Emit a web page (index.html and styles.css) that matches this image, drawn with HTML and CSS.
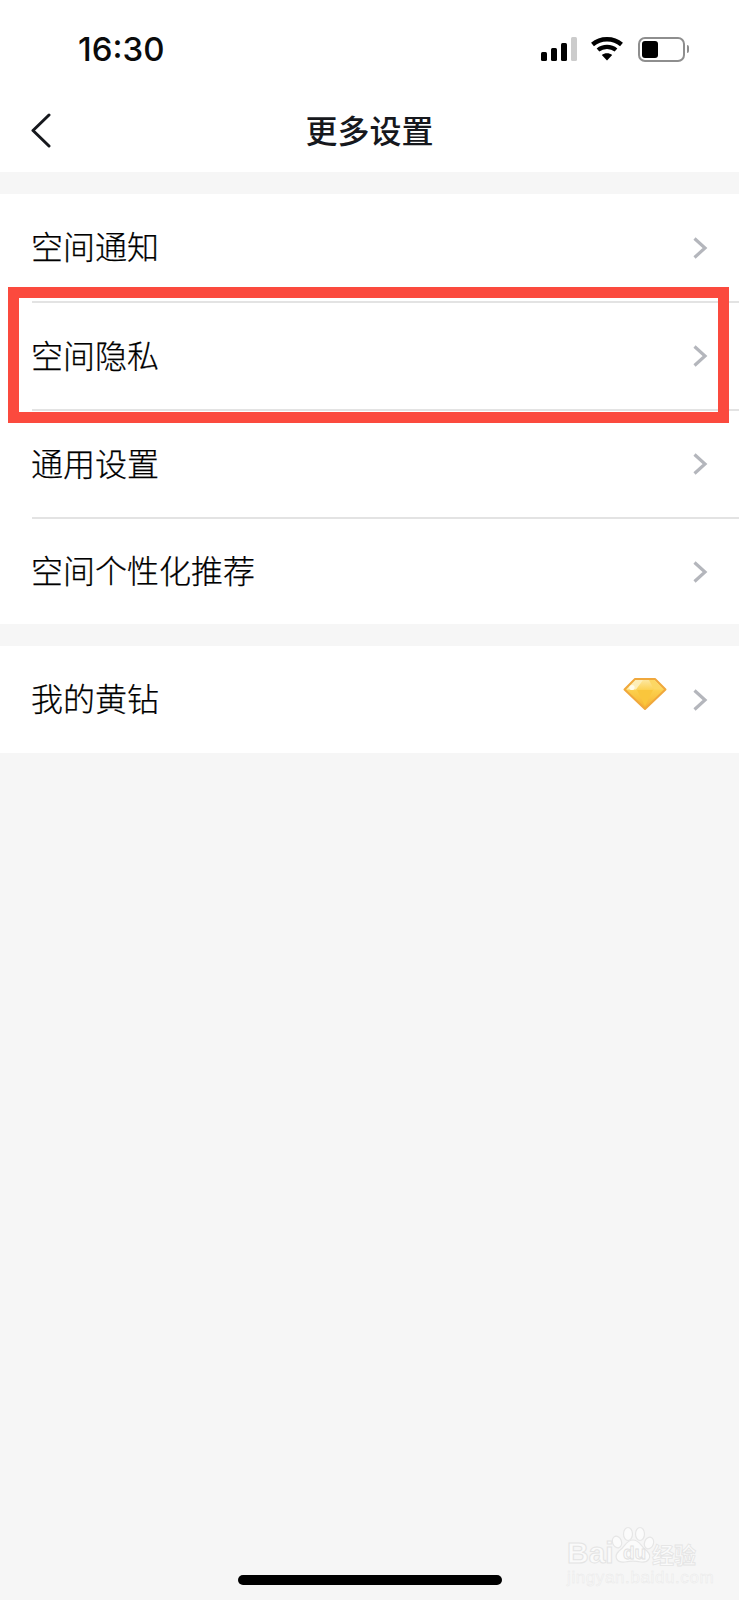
FILE: index.html
```html
<!DOCTYPE html>
<html lang="zh-CN">
<head>
  <meta charset="UTF-8">
  <meta name="viewport" content="width=device-width, initial-scale=1.0">
  <title>更多设置</title>
  <link rel="stylesheet" href="styles.css">
</head>
<body>
  <div class="phone">
    <div class="status-bar">
      <span class="time">16:30</span>
      <div class="status-icons">
        <svg class="signal" width="36" height="25" viewBox="0 0 36 25">
          <rect x="0" y="15" width="6" height="9" rx="1.5" fill="#000"/>
          <rect x="10" y="11" width="6" height="13" rx="1.5" fill="#000"/>
          <rect x="20" y="6" width="6" height="18" rx="1.5" fill="#000"/>
          <rect x="30" y="0" width="6" height="24" rx="1.5" fill="#ccc"/>
        </svg>
        <svg class="wifi" width="32" height="24" viewBox="0 0 32 24">
          <path d="M1.5 7.5 C9.5 0.5 22.5 0.5 30.5 7.5" fill="none" stroke="#000" stroke-width="4.4"/>
          <path d="M7 13 C12 8.8 20 8.8 25 13" fill="none" stroke="#000" stroke-width="4.2"/>
          <path d="M16 23.5 L10.8 18 C13.6 15.6 18.4 15.6 21.2 18 Z" fill="#000"/>
        </svg>
        <div class="battery">
          <div class="battery-body"><div class="battery-level"></div></div>
          <div class="battery-cap"></div>
        </div>
      </div>
    </div>

    <header class="nav">
      <svg class="back" width="22" height="36" viewBox="0 0 22 36">
        <path d="M19 2 L3 17.5 L19 33" fill="none" stroke="#16181d" stroke-width="3" stroke-linecap="round" stroke-linejoin="round"/>
      </svg>
      <h1 class="title">更多设置</h1>
    </header>

    <section class="group first">
      <div class="row"><span class="label">空间通知</span><svg class="chevron" width="16" height="24" viewBox="0 0 16 24"><path d="M2.5 2.5 L13 12 L2.5 21.5" fill="none" stroke="#b4b6bc" stroke-width="3.2"/></svg></div>
      <div class="row"><span class="label">空间隐私</span><svg class="chevron" width="16" height="24" viewBox="0 0 16 24"><path d="M2.5 2.5 L13 12 L2.5 21.5" fill="none" stroke="#b4b6bc" stroke-width="3.2"/></svg></div>
      <div class="row"><span class="label">通用设置</span><svg class="chevron" width="16" height="24" viewBox="0 0 16 24"><path d="M2.5 2.5 L13 12 L2.5 21.5" fill="none" stroke="#b4b6bc" stroke-width="3.2"/></svg></div>
      <div class="row"><span class="label">空间个性化推荐</span><svg class="chevron" width="16" height="24" viewBox="0 0 16 24"><path d="M2.5 2.5 L13 12 L2.5 21.5" fill="none" stroke="#b4b6bc" stroke-width="3.2"/></svg></div>
    </section>

    <section class="group">
      <div class="row">
        <span class="label">我的黄钻</span>
        <svg class="diamond" width="44" height="36" viewBox="0 0 44 36">
          <defs>
            <linearGradient id="gem" x1="0" y1="0" x2="0" y2="1">
              <stop offset="0" stop-color="#fde9a6"/>
              <stop offset="0.4" stop-color="#fccf4c"/>
              <stop offset="1" stop-color="#f6b22f"/>
            </linearGradient>
          </defs>
          <path d="M12 4 H32 L42.5 14.5 L22 34 L1.5 14.5 Z" fill="url(#gem)" stroke="#f0a83c" stroke-width="2" stroke-linejoin="round"/>
          <path d="M12.5 5 H20 L13 14.5 H3.5 Z" fill="#fdeeb8"/>
          <path d="M26 5 H31.5 L40 14.5 H31 Z" fill="#fcd763"/>
          <path d="M14 15 H30 L22 31 Z" fill="#fac63c"/>
          <circle cx="9" cy="12.5" r="2.6" fill="#fffbe9"/>
        </svg>
        <svg class="chevron" width="16" height="24" viewBox="0 0 16 24"><path d="M2.5 2.5 L13 12 L2.5 21.5" fill="none" stroke="#b4b6bc" stroke-width="3.2"/></svg>
      </div>
    </section>

    <div class="highlight"></div>

    <div class="watermark">
      <svg class="paw" width="48" height="44" viewBox="0 0 48 44">
        <g fill="#fbfbfb" stroke="#e6e6e6" stroke-width="1.2">
          <ellipse cx="6" cy="16" rx="4.5" ry="6" transform="rotate(-20 6 16)"/>
          <ellipse cx="17" cy="8" rx="4.5" ry="6.5"/>
          <ellipse cx="29" cy="8" rx="4.5" ry="6.5"/>
          <ellipse cx="38" cy="17" rx="4.5" ry="6" transform="rotate(20 38 17)"/>
          <path d="M22 14 C29 14 30 21 36 25 C42 31 37 37 30 36 C25 35 19 35 14 36 C6 37 2 31 8 25 C14 21 15 14 22 14 Z"/>
        </g>
      </svg>
      <div class="wm-main">
        <span class="wm-bai">Bai</span>
        <span class="wm-du">du</span>
        <span class="wm-cn">经验</span>
      </div>
      <div class="wm-url">jingyan.baidu.com</div>
    </div>

    <div class="home-bar"></div>
  </div>
</body>
</html>
```
FILE: styles.css
```css
* {
  box-sizing: border-box;
}

body {
  margin: 0;
  font-family: "Noto Sans CJK SC", "Liberation Sans", sans-serif;
  background: #f6f6f6;
  color: #16181d;
}

.phone {
  position: relative;
  width: 739px;
  height: 1600px;
  overflow: hidden;
  background: #f6f6f6;
}

.status-bar {
  display: flex;
  justify-content: space-between;
  align-items: center;
  height: 88px;
  padding: 10px 50px 0 78px;
  background: #fff;
}

.time {
  font-family: Inter, "Liberation Sans", sans-serif;
  font-size: 33px;
  font-weight: 500;
  color: #0b0b0b;
}

.status-icons {
  display: flex;
  align-items: center;
  gap: 15px;
}

.signal {
  margin-right: -1px;
}

.battery {
  display: flex;
  align-items: center;
  gap: 2px;
}

.battery-body {
  width: 47px;
  height: 25px;
  padding: 2px;
  border: 2px solid #8e8e8e;
  border-radius: 7px;
}

.battery-level {
  width: 16px;
  height: 17px;
  border-radius: 3px;
  background: #000;
}

.battery-cap {
  width: 2px;
  height: 8px;
  border-radius: 0 2px 2px 0;
  background: #8e8e8e;
}

.nav {
  display: flex;
  justify-content: center;
  align-items: center;
  position: relative;
  height: 84px;
  padding-bottom: 2px;
  background: #fff;
}

.back {
  position: absolute;
  left: 30px;
  top: 25px;
}

.title {
  margin: 0;
  font-size: 32px;
  font-weight: 500;
  line-height: 44px;
}

.group {
  margin-top: 22px;
  background: #fff;
}

.row {
  display: flex;
  align-items: center;
  gap: 24px;
  height: 108px;
  margin-left: 32px;
  padding-right: 31px;
  border-top: 2px solid #e3e3e3;
}

.row:first-child {
  border-top: none;
  height: 107px;
}

.row:last-child {
  height: 107px;
}

.label {
  flex: 1;
  margin-left: -1px;
  padding-bottom: 5px;
  font-size: 32px;
  font-weight: 300;
  line-height: 44px;
  color: #000;
  -webkit-text-stroke: 0.25px #000;
}

.chevron {
  flex: none;
}

.diamond {
  flex: none;
  margin-top: -13px;
  margin-right: 1px;
}

/* red annotation box drawn over the second row */
.highlight {
  position: absolute;
  left: 8px;
  top: 287px;
  width: 721px;
  height: 136px;
  border: 11px solid #fb4a3e;
}

.watermark {
  position: absolute;
  left: 567px;
  top: 1526px;
  width: 132px;
  height: 60px;
}

.paw {
  position: absolute;
  left: 44px;
  top: 0;
}

.wm-main {
  position: relative;
  display: flex;
  align-items: center;
  height: 26px;
  margin-top: 14px;
  color: #fafafa;
  white-space: nowrap;
}

.wm-bai {
  width: 50px;
  font-family: "Liberation Sans", sans-serif;
  font-size: 30px;
  font-weight: 700;
  -webkit-text-stroke: 1px #e4e4e4;
}

.wm-du {
  width: 35px;
  font-family: "Liberation Sans", sans-serif;
  font-size: 19px;
  font-weight: 700;
  text-align: center;
  -webkit-text-stroke: 0.8px #e0e0e0;
}

.wm-cn {
  font-family: "Noto Sans CJK SC", sans-serif;
  font-size: 22px;
  font-weight: 700;
  -webkit-text-stroke: 0.8px #e4e4e4;
}

.wm-url {
  margin-top: 3px;
  font-family: "Liberation Sans", sans-serif;
  font-size: 17px;
  line-height: 18px;
  letter-spacing: 0.6px;
  white-space: nowrap;
  color: #f8f8f8;
  -webkit-text-stroke: 0.4px #e8e8e8;
}

.home-bar {
  position: absolute;
  left: 238px;
  top: 1575px;
  width: 264px;
  height: 10px;
  border-radius: 5px;
  background: #000;
}
```
